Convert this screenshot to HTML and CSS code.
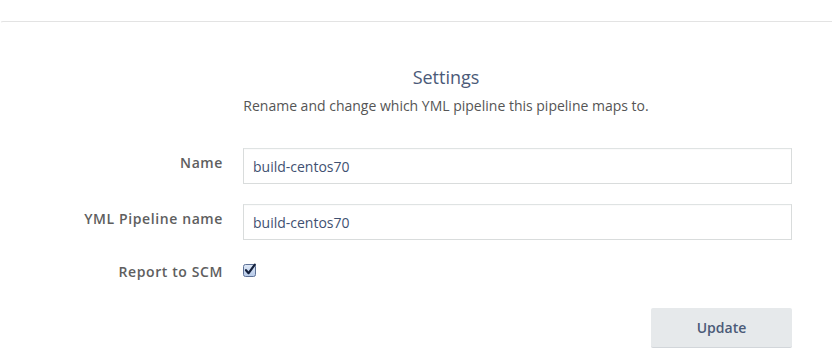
FILE: index.html
```html
<!DOCTYPE html>
<html>
<head>
<meta charset="utf-8">
<link rel="stylesheet" href="styles.css">
</head>
<body>
<div class="top"></div>
<div class="card">
  <div class="content">
    <h2 class="title">Settings</h2>
    <p class="subtitle">Rename and change which YML pipeline this pipeline maps to.</p>
    <form class="form">
      <label class="label" for="n"><span>Name</span></label>
      <input class="input" id="n" type="text" value="build-centos70">
      <label class="label" for="y"><span>YML Pipeline name</span></label>
      <input class="input" id="y" type="text" value="build-centos70">
      <span class="label label-check"><span>Report to SCM</span></span>
      <span class="check">
        <svg width="14" height="14" viewBox="0 0 14 14">
          <defs>
            <linearGradient id="g" x1="0" y1="0" x2="0" y2="1">
              <stop offset="0" stop-color="#dfe9f7"/>
              <stop offset="1" stop-color="#b6c9e8"/>
            </linearGradient>
          </defs>
          <rect x="0.5" y="1.5" width="12" height="12" rx="2" fill="url(#g)" stroke="#5d7196"/>
          <path d="M3 7.2 L5.6 10.2 L11.8 1.6" fill="none" stroke="#14213d" stroke-width="2.2" stroke-linecap="round" stroke-linejoin="round"/>
        </svg>
      </span>
      <div class="actions">
        <button class="btn" type="button">Update</button>
      </div>
    </form>
  </div>
</div>
</body>
</html>
```

FILE: styles.css
```css
html, body {
  margin: 0;
  padding: 0;
  background: #fff;
}
body {
  font-family: "Open Sans", "Noto Sans", sans-serif;
  font-size: 14px;
  color: #555;
}
.top {
  height: 21px;
}
.card {
  border-top: 1px solid #e3e3e3;
  border-left: 1px solid transparent;
  border-top-left-radius: 3px;
  height: 340px;
}
.content {
  width: 690px;
  margin-left: 100px;
}
.title {
  margin: 43px 0 0;
  font-size: 18px;
  font-weight: 400;
  line-height: 24px;
  text-align: center;
  color: #4b5a78;
}
.subtitle {
  margin: 8px 0 0;
  font-size: 14px;
  line-height: 18px;
  text-align: center;
  color: #555;
}
.form {
  margin-top: 33px;
  display: grid;
  grid-template-columns: 122px 1fr;
  column-gap: 20px;
  row-gap: 20px;
}
.label {
  display: flex;
  justify-content: flex-end;
  align-items: flex-start;
  font-size: 14px;
  font-weight: 600;
  letter-spacing: 0.6px;
  color: #5e5e5e;
  line-height: 18px;
  padding-top: 6px;
  white-space: nowrap;
}
.input {
  box-sizing: border-box;
  height: 36px;
  width: 549px;
  margin: 0;
  padding: 0 9px;
  border: 1px solid #d9dcdc;
  border-top-color: #dfe3e3;
  border-radius: 0;
  font-family: "Open Sans", "Noto Sans", sans-serif;
  font-size: 14px;
  color: #3f5172;
  background: #fff;
  box-shadow: inset 0 1px 1px rgba(0,0,0,0.02);
}
.label-check {
  padding-top: 3px;
}
.check {
  display: block;
  height: 25px;
  padding-top: 3px;
}
.check svg {
  display: block;
}
.actions {
  grid-column: 2;
  display: flex;
  justify-content: flex-end;
}
.btn {
  width: 141px;
  height: 40px;
  margin: 0;
  border: none;
  border-bottom: 1px solid #d2d6da;
  border-radius: 2px;
  background: #e6e9eb;
  color: #4b5a78;
  font-family: "Open Sans", "Noto Sans", sans-serif;
  font-size: 14px;
  font-weight: 600;
}
```
